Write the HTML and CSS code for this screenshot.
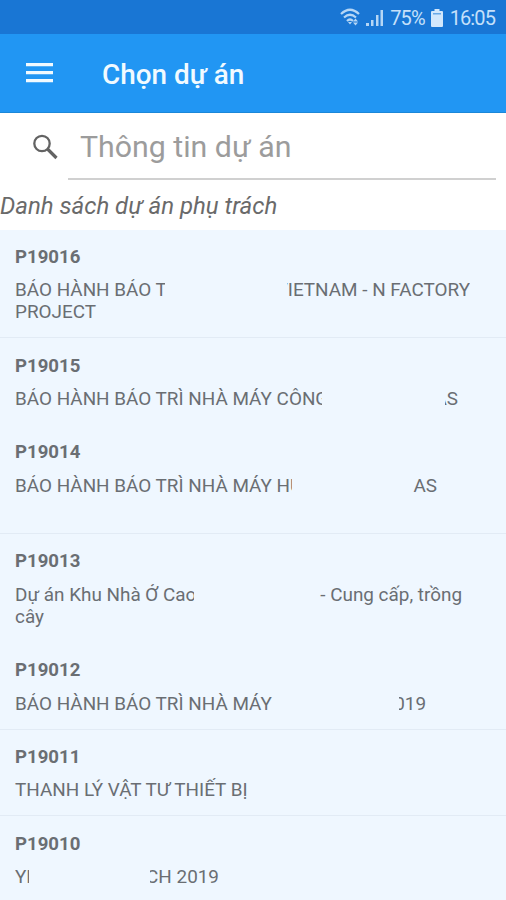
FILE: index.html
```html
<!DOCTYPE html>
<html lang="vi">
<head>
  <meta charset="UTF-8">
  <meta name="viewport" content="width=device-width, initial-scale=1.0">
  <title>Chọn dự án</title>
  <link rel="stylesheet" href="styles.css">
</head>
<body>
  <div class="status-bar">
    <svg class="wifi" width="22" height="18" viewBox="0 0 22 18" fill="none" stroke="#b5d6f5" stroke-width="2.200">
      <path d="M1 6Q10 -2.500 19 6M4 9.500Q10 4 16 9.500M7 13Q10 10 13 13"/>
      <path d="M8 14h4l-2 2.500zM13 13.500h5l-2.500-3zM13 14.500h5l-2.500 3z" fill="#b5d6f5" stroke="none"/>
    </svg>
    <svg class="signal" width="18" height="18" viewBox="0 0 18 18" fill="#b5d6f5">
      <path d="M0 14h3v3H0zM5 11h2.500v6H5zM10 6h2.500v11H10zM14.500 1H17v16h-2.500z"/>
    </svg>
    <span class="percent">75%</span>
    <svg class="battery" width="12" height="18" viewBox="0 0 12 18" fill="#d3e8fc">
      <path d="M3.500 0h5v2H11q1 0 1 1v14q0 1-1 1H1q-1 0-1-1V3q0-1 1-1h2.500z"/>
      <path d="M2 4h8v1.500H2z" fill="#69a9e7"/>
    </svg>
    <span class="time">16:05</span>
  </div>

  <header class="toolbar">
    <svg class="menu" width="27" height="20" viewBox="0 0 27 20" fill="#f1faff">
      <path d="M0 0h27v3.300H0zM0 8h27v3.300H0zM0 16h27v3.300H0z"/>
    </svg>
    <h1>Chọn dự án</h1>
  </header>

  <div class="search">
    <svg class="search-icon" width="26" height="26" viewBox="0 0 26 26" fill="none" stroke="#636363">
      <circle cx="10" cy="9.500" r="7.700" stroke-width="2.300"/>
      <path d="M15.500 15l9 9" stroke-width="3.200"/>
    </svg>
    <div class="search-field">Thông tin dự án</div>
  </div>
  <p class="caption">Danh sách dự án phụ trách</p>

  <div class="project-list">
    <div class="project tall">
      <h2>P19016</h2>
      <div class="line"><span class="start w-150">BẢO HÀNH BẢO TRÌ</span><span class="end e-183">VIETNAM - N FACTORY</span></div>
      <div class="line">PROJECT</div>
    </div>
    <div class="project no-border">
      <h2>P19015</h2>
      <div class="line"><span class="start w-307">BẢO HÀNH BẢO TRÌ NHÀ MÁY CÔNG</span><span class="end e-13">AS</span></div>
    </div>
    <div class="project tall">
      <h2>P19014</h2>
      <div class="line"><span class="start w-277">BẢO HÀNH BẢO TRÌ NHÀ MÁY HU</span><span class="end e-24">AS</span></div>
    </div>
    <div class="project tall no-border">
      <h2>P19013</h2>
      <div class="line"><span class="start w-179">Dự án Khu Nhà Ở Cao</span><span class="end e-143">- Cung cấp, trồng</span></div>
      <div class="line">cây</div>
    </div>
    <div class="project">
      <h2>P19012</h2>
      <div class="line"><span class="start w-258">BẢO HÀNH BẢO TRÌ NHÀ MÁY</span><span class="end e-27">2019</span></div>
    </div>
    <div class="project">
      <h2>P19011</h2>
      <div class="line">THANH LÝ VẬT TƯ THIẾT BỊ</div>
    </div>
    <div class="project">
      <h2>P19010</h2>
      <div class="line"><span class="start w-14">YÊ</span><span class="end e-69">CH 2019</span></div>
    </div>
  </div>
</body>
</html>
```
FILE: styles.css
```css
* {
  box-sizing: border-box;
}
body {
  margin: 0;
  height: 900px;
  overflow: hidden;
  background-color: #fff;
  color: #6a6e73;
  font-family: Roboto, "Noto Sans", sans-serif;
}
h1, h2, p {
  margin: 0;
}
.status-bar {
  display: flex;
  align-items: center;
  justify-content: flex-end;
  height: 34px;
  padding: 2px 11px 0 0;
  background-color: #1976d4;
  color: #c5e0fa;
  font-size: 20px;
  letter-spacing: -0.9px;
}
.wifi {
  margin-bottom: 3px;
}
.signal {
  margin: 0 6px 0 4px;
}
.battery {
  margin: 0 7px 0 6px;
}
.toolbar {
  display: flex;
  align-items: center;
  height: 79px;
  padding-left: 26px;
  background-color: #2196f3;
  border-bottom: 1px solid #1b87d8;
  color: #f1faff;
}
.toolbar h1 {
  margin-left: 49px;
  padding-top: 3px;
  font-size: 27.9px;
  font-weight: 500;
}
.search {
  display: flex;
  align-items: center;
  height: 67px;
  padding: 0 10px 0 32px;
}
.search-field {
  flex: 1;
  height: 67px;
  margin-left: 10px;
  padding-left: 12px;
  border-bottom: 2px solid #d0d0d0;
  color: #9c9c9c;
  font-size: 30.3px;
  line-height: 68px;
}
.caption {
  height: 49.6px;
  color: #6a6a6a;
  font-size: 24px;
  font-style: italic;
  line-height: 53px;
  white-space: nowrap;
}
.project-list {
  background-color: #eff7ff;
}
.project {
  height: 86.8px;
  padding: 16.2px 15px 0;
  border-bottom: 1px solid #e2ebf5;
}
.project.tall {
  height: 108.8px;
}
.project.no-border {
  border-bottom-color: transparent;
}
.project h2 {
  height: 22px;
  margin-bottom: 11.6px;
  font-size: 18.6px;
  font-weight: 700;
  line-height: 22px;
}
.line {
  display: flex;
  height: 22px;
  font-size: 18.9px;
  line-height: 22px;
  white-space: nowrap;
}
/* long names are cut, only the two ends stay visible */
.start, .end {
  overflow: hidden;
}
.end {
  display: flex;
  justify-content: flex-end;
}
.w-150 { width: 150px; }
.w-307 { width: 307px; }
.w-277 { width: 277px; }
.w-179 { width: 179px; }
.w-258 { width: 258px; }
.w-14 { width: 14px; }
.e-183 { width: 183px; margin-left: 122px; }
.e-13 { width: 13px; margin-left: 123px; }
.e-24 { width: 24px; margin-left: 121px; }
.e-143 { width: 143px; margin-left: 125px; }
.e-27 { width: 27px; margin-left: 126px; }
.e-69 { width: 69px; margin-left: 121px; }
```
